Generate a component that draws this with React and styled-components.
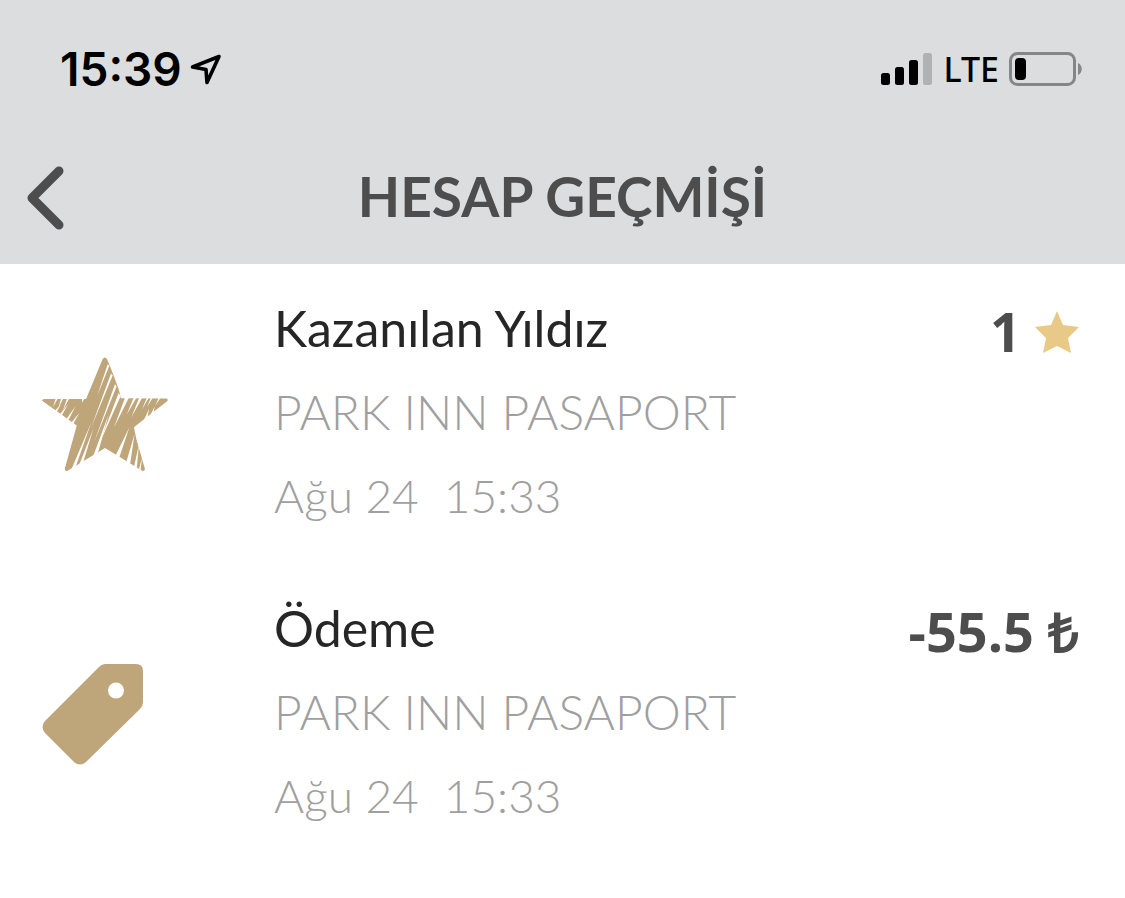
import React from 'react'
import styled, { createGlobalStyle } from 'styled-components'

const gold = '#bfa67a'
const ink = '#4d4d4d'

const records = [
  { id: 1, kind: 'star', title: 'Kazanılan Yıldız', place: 'PARK INN PASAPORT', date: 'Ağu 24', time: '15:33', amount: '1' },
  { id: 2, kind: 'payment', title: 'Ödeme', place: 'PARK INN PASAPORT', date: 'Ağu 24', time: '15:33', amount: '-55.5 ₺' },
]

const LocationIcon = () => (
  <svg width="32" height="32" viewBox="0 0 32 32" fill="none" stroke="#000" strokeWidth="3.6" strokeLinejoin="round" aria-hidden="true">
    <path d="M29 3.500 2.500 14 16 16.500 17 29.500Z" />
  </svg>
)

const SignalIcon = () => (
  <svg width="52" height="34" viewBox="0 0 52 34" aria-hidden="true">
    <rect x="0" y="21" width="9" height="12" rx="2.500" />
    <rect x="14" y="15" width="9" height="18" rx="2.500" />
    <rect x="28" y="8" width="9" height="25" rx="2.500" />
    <rect x="42" y="1" width="9" height="32" rx="2.500" fill="#b0b1b3" />
  </svg>
)

const BatteryIcon = () => (
  <svg width="74" height="34" viewBox="0 0 74 34" aria-hidden="true">
    <rect x="1.500" y="1.500" width="64" height="31" rx="7" fill="none" stroke="#858688" strokeWidth="3" />
    <rect x="6" y="6" width="11" height="22" rx="4" />
    <path d="M69 11c5 2 5 10 0 12z" fill="#858688" />
  </svg>
)

const BackIcon = () => (
  <svg width="38" height="64" viewBox="0 0 38 64" fill="none" stroke={ink} strokeWidth="9" strokeLinecap="round" strokeLinejoin="round" aria-hidden="true">
    <path d="M33 5 6 32 33 59" />
  </svg>
)

// star shape with tapered pencil gaps cut over it
const SketchStar = () => (
  <svg width="126" height="115" viewBox="36 34 378 346" aria-hidden="true">
    <path
      fill={gold}
      d="M218 40q7-10 14 2L242 66 254 98 266 130 273 158 410 159q7 3 1 9L354 212 312 245 320 284 345 370q0 8-7 7L225 308 110 378q-6-1-6-8L140 240 36 166q-1-6 6-6L168 160Z"
    />
    <g fill="#fff">
      <path d="M78 155h7L68 186ZM94 155h7L84 190ZM112 155h7L98 196ZM156 155h9L156 172Z" />
      <path d="M72 198h8L92 178ZM88 208h8L114 176ZM108 222h8L136 182ZM122 234h8L148 202Z" />
      <path d="M233 56 238 60 202 150ZM243 84 248 90 182 250ZM255 116 260 122 192 292ZM266 142 272 152 204 304Z" />
      <path d="M286 154h12L252 246ZM312 154h9L290 208ZM329 154h9L304 216ZM352 154h6L336 192ZM364 154h6L352 184ZM388 154h6L376 180Z" />
      <path d="M340 228h10L358 190ZM360 212h10L374 184Z" />
      <path d="M118 386h11L184 230ZM146 362h10L190 250ZM188 336h12L236 206ZM254 336h14L298 246ZM288 354h13L314 266ZM312 366h9L327 298ZM326 376h6L336 338Z" />
    </g>
  </svg>
)

const TagIcon = () => (
  <svg width="101" height="101" viewBox="0 0 101 101" aria-hidden="true">
    <path
      fill={gold}
      fillRule="evenodd"
      d="M63 0H94Q101 0 101 7V38Q101 42 98 45L44 98Q38 103 32 98L3 69Q-2 63 3 57L57 3Q60 0 63 0ZM74 18.500a8 8 0 1 0 0 16 8 8 0 1 0 0-16Z"
    />
  </svg>
)

const SmallStar = () => (
  <svg width="44" height="44" viewBox="0 -2 44 44" aria-hidden="true">
    <path fill="#e9c988" d="M22 0 28 14 44 16 33 27 36 42 22 35 8 42 11 27 0 16 16 14Z" />
  </svg>
)

const App = () => {
  return (
    <>
      <GlobalStyle />
      <Header>
        <StatusBar>
          <Clock>15:39 <LocationIcon /></Clock>
          <Indicators>
            <SignalIcon />
            <Network>LTE</Network>
            <BatteryIcon />
          </Indicators>
        </StatusBar>
        <NavBar>
          <BackButton type="button" aria-label="Geri"><BackIcon /></BackButton>
          <Title>HESAP GEÇMİŞİ</Title>
        </NavBar>
      </Header>
      <List>
        {records.map((record) => (
          <Record key={record.id}>
            <IconCell>{record.kind === 'star' ? <SketchStar /> : <TagIcon />}</IconCell>
            <Details>
              <Name>{record.title}</Name>
              <Place>{record.place}</Place>
              <Time>{record.date}&nbsp; {record.time}</Time>
            </Details>
            <Amount>
              {record.amount}
              {record.kind === 'star' && <SmallStar />}
            </Amount>
          </Record>
        ))}
      </List>
    </>
  )
}

const GlobalStyle = createGlobalStyle`
  body {
    margin: 0;
    background: #fff;
    font-family: Lato, "Open Sans", sans-serif;
  }
`

const Header = styled.header`
  background: #dcdddf;
`

const StatusBar = styled.div`
  display: flex;
  justify-content: space-between;
  align-items: center;
  height: 132px;
  padding: 6px 42px 0 60px;
  box-sizing: border-box;
  color: #000;
`

const Clock = styled.div`
  display: flex;
  align-items: center;
  gap: 8px;
  font: 600 46px/52px Inter, sans-serif;
`

const Indicators = styled.div`
  display: flex;
  align-items: center;
  gap: 10px;
`

const Network = styled.span`
  font: 500 34px/44px "Noto Sans", sans-serif;
`

const NavBar = styled.div`
  display: grid;
  grid-template-columns: 64px 1fr 64px;
  align-items: center;
  height: 132px;
  padding: 0 26px;
`

const BackButton = styled.button`
  display: flex;
  padding: 0;
  border: 0;
  background: none;
  cursor: pointer;
`

const Title = styled.h1`
  margin: 0;
  padding-bottom: 4px;
  color: ${ink};
  font-size: 55px;
  font-weight: 700;
  line-height: 64px;
  text-align: center;
`

const List = styled.ul`
  margin: 0;
  padding: 0;
  list-style: none;
`

const Record = styled.li`
  display: grid;
  grid-template-columns: 232px 1fr auto;
  padding: 22px 46px 26px 42px;
`

const IconCell = styled.div`
  display: flex;
  align-items: center;
  padding-top: 4px;
`

const Details = styled.div`
  min-width: 0;
`

const Line = styled.p`
  margin: 0;
  color: #9f9f9f;
  font-size: 48px;
  font-weight: 300;
  line-height: 84px;
`

const Name = styled(Line)`
  color: #262626;
  font-size: 50px;
  font-weight: 400;
`

const Place = styled(Line)``

const Time = styled(Line)`
  font-size: 46px;
`

const Amount = styled.div`
  display: flex;
  align-items: center;
  align-self: start;
  gap: 14px;
  color: ${ink};
  font-family: "Open Sans", sans-serif;
  font-size: 54px;
  font-weight: 700;
  line-height: 90px;
`

export default App
